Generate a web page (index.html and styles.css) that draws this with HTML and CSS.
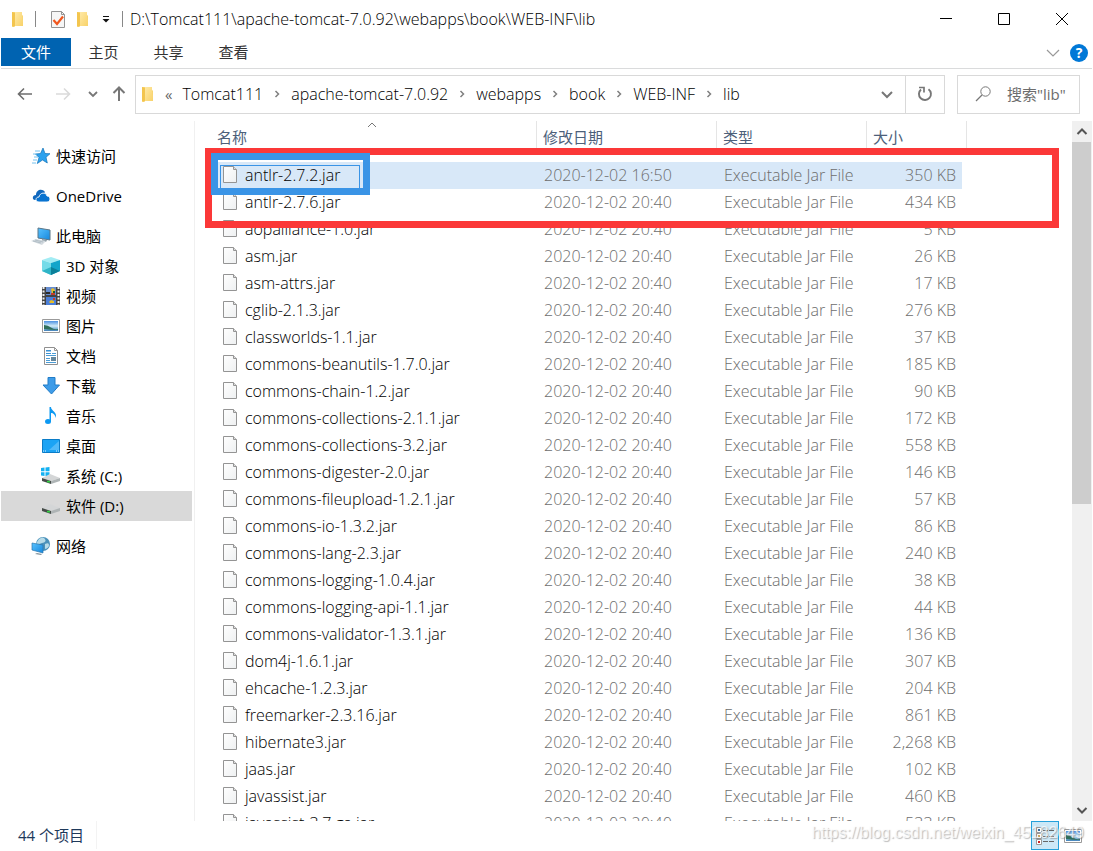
FILE: index.html
```html
<!DOCTYPE html>
<html lang="zh-CN">
<head>
<meta charset="utf-8">
<title>lib</title>
<link rel="stylesheet" href="styles.css">
</head>
<body>
<svg class="defs" width="0" height="0" aria-hidden="true">
  <defs>
    <linearGradient id="fold" x1="0" y1="0" x2="1" y2="1"><stop offset="0" stop-color="#ffe9a6"/><stop offset="1" stop-color="#f8d269"/></linearGradient>
    <linearGradient id="sky" x1="0" y1="0" x2="0" y2="1"><stop offset="0" stop-color="#4a90e2"/><stop offset=".5" stop-color="#d4ecf7"/><stop offset=".7" stop-color="#8fbfe0"/><stop offset="1" stop-color="#3f7fb8"/></linearGradient>
    <linearGradient id="blue" x1="0" y1="0" x2="1" y2="1"><stop offset="0" stop-color="#58c2ff"/><stop offset="1" stop-color="#1687dc"/></linearGradient>
    <linearGradient id="paper" x1="0" y1="0" x2="1" y2="1"><stop offset="0" stop-color="#fff"/><stop offset="1" stop-color="#eef0f1"/></linearGradient>
    <symbol id="folder" viewBox="0 0 14 17"><path d="M1 1h8l3 4v10H4L1 16z" fill="#f9d673"/><path d="M4 1h7v8h1v6H4z" fill="url(#fold)"/><path d="M1 1l3 1v13l-1 1-2-1z" fill="#f3c54e"/></symbol>
    <symbol id="file" viewBox="0 0 16 19"><path d="M1.500 1.500h10l3 3v13h-13z" fill="url(#paper)" stroke="#949494"/><path d="M11.500 1.500v3h3" fill="#ddd" stroke="#949494"/></symbol>
    <symbol id="chev" viewBox="0 0 6 8"><path d="M1.500 1l3 3-3 3" fill="none" stroke="#808080" stroke-width="1.500"/></symbol>
    <symbol id="picture" viewBox="0 0 18 14"><path d="M.5.500h17v13H.5z" fill="#fff" stroke="#9a9a9a"/><path d="M2 2h14v10H2z" fill="url(#sky)"/><path d="M2 6q4 0 7 2.500t7 1.500v1q-8 0-14-1z" fill="#2f6f5c"/></symbol>
    <symbol id="drive" viewBox="0 0 18 11"><path d="M0 5L8 1l10 4-9 3z" fill="#d4d6d7"/><path d="M0 5l9 3v3L0 8z" fill="#454c48"/><path d="M9 8l9-3v3l-9 3z" fill="#aeb4b5"/><path d="M5 7.800h3v1.700H5z" fill="#34cf45"/></symbol>
  </defs>
</svg>
<div class="window">
  <header class="titlebar">
    <svg class="ic-folder" role="img" aria-label="lib"><use href="#folder"/></svg>
    <span class="sep"></span>
    <svg class="ic-check" viewBox="0 0 16 19"><path d="M1.500 1.500h10l3 3v13h-13z" fill="#f6f6f6" stroke="#949494"/><path d="M11.500 1.500v3h3" fill="none" stroke="#949494"/><path d="M3.500 10l3.500 4 6-7.500" fill="none" stroke="#f0571f" stroke-width="2.200"/></svg>
    <svg class="ic-folder"><use href="#folder"/></svg>
    <svg class="ic-drop" viewBox="0 0 8 8"><path d="M1 1.500h6" stroke="#111"/><path d="M.5 4h7L4 7.500z" fill="#111"/></svg>
    <span class="sep sep-title"></span>
    <h1 class="title">D:\Tomcat111\apache-tomcat-7.0.92\webapps\book\WEB-INF\lib</h1>
    <div class="winbtns">
      <button type="button" aria-label="最小化"><svg viewBox="0 0 14 14"><path d="M1 6.500h12" stroke="#000"/></svg></button>
      <button type="button" aria-label="最大化"><svg viewBox="0 0 14 14"><path d="M1.500 1.500h11v11h-11z" fill="none" stroke="#000"/></svg></button>
      <button type="button" aria-label="关闭"><svg viewBox="0 0 14 14"><path d="M1 1l12 12M13 1L1 13" stroke="#000"/></svg></button>
    </div>
  </header>
  <nav class="ribbon">
    <button type="button" class="tab tab-file">文件</button>
    <button type="button" class="tab">主页</button>
    <button type="button" class="tab">共享</button>
    <button type="button" class="tab">查看</button>
    <div class="ribbon-right">
      <button type="button" aria-label="展开功能区"><svg class="ic-expand" viewBox="0 0 14 8"><path d="M1 1l6 6 6-6" fill="none" stroke="#999" stroke-width="1.200"/></svg></button>
      <button type="button" class="help" aria-label="帮助">?</button>
    </div>
  </nav>
  <div class="navrow">
    <div class="arrows">
      <button type="button" aria-label="后退"><svg viewBox="0 0 16 14"><path d="M15 7H1.500M7 1.500L1.500 7 7 12.500" fill="none" stroke="#6d6d6d" stroke-width="1.600"/></svg></button>
      <button type="button" aria-label="前进"><svg viewBox="0 0 16 14"><path d="M1 7h13.500M9 1.500L14.500 7 9 12.500" fill="none" stroke="#dadada" stroke-width="1.600"/></svg></button>
      <button type="button" aria-label="最近位置" class="recent"><svg viewBox="0 0 10 8"><path d="M1 2l4 4 4-4" fill="none" stroke="#777" stroke-width="1.800"/></svg></button>
      <button type="button" aria-label="上移" class="up"><svg viewBox="0 0 14 16"><path d="M7 15V1.500M1.500 7L7 1.500 12.500 7" fill="none" stroke="#777" stroke-width="2"/></svg></button>
    </div>
    <div class="address">
      <svg class="ic-folder"><use href="#folder"/></svg>
      <span class="laquo">«</span>
      <div class="crumbs">
        <a href="#">Tomcat111</a><svg class="ic-chev"><use href="#chev"/></svg>
        <a href="#">apache-tomcat-7.0.92</a><svg class="ic-chev"><use href="#chev"/></svg>
        <a href="#">webapps</a><svg class="ic-chev"><use href="#chev"/></svg>
        <a href="#">book</a><svg class="ic-chev"><use href="#chev"/></svg>
        <a href="#">WEB-INF</a><svg class="ic-chev"><use href="#chev"/></svg>
        <a href="#">lib</a>
      </div>
      <button type="button" class="history" aria-label="历史"><svg viewBox="0 0 12 9"><path d="M1 2l5 5 5-5" fill="none" stroke="#777" stroke-width="2"/></svg></button>
      <button type="button" class="refresh" aria-label="刷新"><svg viewBox="0 0 16 16"><path d="M11.500 3.200A6 6 0 1 1 4 3.500" fill="none" stroke="#777" stroke-width="1.900"/><path d="M2 1.500h5v5" fill="none" stroke="#777" stroke-width="1.700"/></svg></button>
    </div>
    <label class="search">
      <svg viewBox="0 0 16 16"><circle cx="10.500" cy="5.500" r="4.700" fill="none" stroke="#777"/><path d="M7 9l-6 6" stroke="#777" stroke-width="1.200"/></svg>
      <input type="text" aria-label="搜索" placeholder='搜索"lib"'>
    </label>
  </div>
  <main class="body">
    <nav class="tree">
      <a href="#" class="top"><svg viewBox="0 0 20 20"><path d="M12 2l2 5.500 5 .2-4 3.600 1.300 5.700-4.800-3-5.200 3.500 1.700-6L4.500 8l5-.5z" fill="#2ba1ee" stroke="#1273b8" stroke-width=".7"/><path d="M4 5h5M2 8h4M3 11h4M2 14h4M1 17h4" stroke="#75c2ef"/></svg>快速访问</a>
      <a href="#" class="top"><svg viewBox="0 0 20 20"><path d="M4 14C1 14 1 9 5 9c0-5 6-7 9-3l-5 8z" fill="#1168bd"/><path d="M8 16c-4 0-4-5 0-5 1-5 7-5 8-1 4 0 4 6 0 6z" fill="#0873d0" stroke="#fff" stroke-width=".9"/></svg>OneDrive</a>
      <a href="#" class="top"><svg viewBox="0 0 20 20"><path d="M7 2l12 2v10L7 12z" fill="url(#blue)" stroke="#5b7688"/><path d="M11 13l5 1-1 2-4-1z" fill="#8c9aa2"/><path d="M0 15l5-2 10 2-4 4z" fill="#d3dadf"/><path d="M2 15l8 2M4 14l8 2" stroke="#9aabb5" stroke-width=".6"/></svg>此电脑</a>
      <a href="#"><svg viewBox="0 0 20 20"><path d="M10 1l9 3-9 3-9-3z" fill="#a2ecf4"/><path d="M1 4l9 3v12l-9-4z" fill="#74dbe8"/><path d="M19 4l-9 3v12l9-4z" fill="#13a5ca"/><path d="M1 15l9-4v8z" fill="#2fb4c6"/><path d="M19 15l-9-4v8z" fill="#0c8099"/></svg>3D 对象</a>
      <a href="#"><svg viewBox="0 0 20 20"><path d="M1 1h18v18H1z" fill="#444"/><path d="M5 1h10v8H5z" fill="#668dcf"/><path d="M5 11h10v8H5z" fill="#4a7ed8"/><path d="M2.500 1v18M17.500 1v18" stroke="#eee" stroke-width="2" stroke-dasharray="2 1.500"/><path d="M10 3l2-1 2 2v3l-3 1z" fill="#e5bd2b"/><path d="M8 16l2-2 3 1v2H9z" fill="#e5bd2b"/><path d="M5 6h4v2H5z" fill="#2b2b2b"/><path d="M10 7h4v2h-4zM12 12h2v2h-2z" fill="#c53c2a"/><path d="M12 5h2v2h-2z" fill="#1d5a30"/></svg>视频</a>
      <a href="#"><svg viewBox="0 0 20 20"><use href="#picture" x="1" y="3" width="18" height="14"/></svg>图片</a>
      <a href="#"><svg viewBox="0 0 20 20"><path d="M3.500 1.500h10l3 3v14h-13z" fill="#fff" stroke="#909090"/><path d="M13.500 1.500v3h3" fill="none" stroke="#999"/><path d="M5 4h5v1.500H5zM5 7h5v1H5z" fill="#3b91d2"/><path d="M5 9.500h10M5 12.500h4M5 14.500h4M5 16.500h10M11 7.500h4" stroke="#4b9cd5"/><path d="M10 11h5v4h-5z" fill="#64869b"/></svg>文档</a>
      <a href="#"><svg viewBox="0 0 20 20"><path d="M7 1.500h7V9h4.500L10.500 18 2 9h5z" fill="#3e9ce8" stroke="#217cc7"/></svg>下载</a>
      <a href="#"><svg viewBox="0 0 20 20"><ellipse cx="7" cy="15.500" rx="3" ry="2.500" fill="#0d99f2"/><path d="M8.500 15.500V1h1.500c0 4 7 5 4.500 11 0-3-2-5-4.500-5v8.500z" fill="#0d99f2"/></svg>音乐</a>
      <a href="#"><svg viewBox="0 0 20 20"><path d="M1.500 3.500h17v13h-17z" fill="#1ba3f4" stroke="#0a7cc7"/><path d="M18 5L8 14h10z" fill="#51b9f8"/><path d="M2 15h3M15 15h3" stroke="#dff2ff" stroke-dasharray="1 1"/></svg>桌面</a>
      <a href="#"><svg viewBox="0 0 20 20"><path d="M0 2l3.500-.5v3.700H0zM4.500 1.400L8.500 1v4.200h-4zM0 6.200h3.500v3.700L0 9.500zM4.500 6.200h4v4.200l-4-.4z" fill="#13b1f2"/><use href="#drive" x="1" y="7" width="18" height="11"/></svg>系统 (C:)</a>
      <a href="#" class="current"><svg viewBox="0 0 20 20"><use href="#drive" x="1" y="7" width="18" height="11"/></svg>软件 (D:)</a>
      <a href="#" class="top last"><svg viewBox="0 0 20 20"><circle cx="12" cy="8" r="7" fill="#4a91ba"/><path d="M8 3q4-3 6 0t-3 4-3 5q-4-3-2-6zM14 8q4-2 4 1t-4 4z" fill="#b7dbe8"/><path d="M1 7l11 2v8L1 14z" fill="url(#blue)" stroke="#2b77ae" stroke-width=".7"/><path d="M6 17l5 1-1 1-6-1z" fill="#82929b"/></svg>网络</a>
    </nav>
    <section class="files">
      <table>
        <colgroup><col><col class="c-date"><col class="c-type"><col class="c-size"></colgroup>
        <thead><tr>
          <th><span class="th th-first">名称<svg class="sort" viewBox="0 0 10 6"><path d="M1 5l4-4 4 4" fill="none" stroke="#777"/></svg></span></th>
          <th><span class="th">修改日期</span></th><th><span class="th">类型</span></th><th><span class="th th-last">大小</span></th>
        </tr></thead>
        <tbody>
          <tr class="selected"><td><svg><use href="#file"/></svg>antlr-2.7.2.jar</td><td>2020-12-02 16:50</td><td>Executable Jar File</td><td>350 KB</td></tr>
          <tr><td><svg><use href="#file"/></svg>antlr-2.7.6.jar</td><td>2020-12-02 20:40</td><td>Executable Jar File</td><td>434 KB</td></tr>
          <tr><td><svg><use href="#file"/></svg>aopalliance-1.0.jar</td><td>2020-12-02 20:40</td><td>Executable Jar File</td><td>5 KB</td></tr>
          <tr><td><svg><use href="#file"/></svg>asm.jar</td><td>2020-12-02 20:40</td><td>Executable Jar File</td><td>26 KB</td></tr>
          <tr><td><svg><use href="#file"/></svg>asm-attrs.jar</td><td>2020-12-02 20:40</td><td>Executable Jar File</td><td>17 KB</td></tr>
          <tr><td><svg><use href="#file"/></svg>cglib-2.1.3.jar</td><td>2020-12-02 20:40</td><td>Executable Jar File</td><td>276 KB</td></tr>
          <tr><td><svg><use href="#file"/></svg>classworlds-1.1.jar</td><td>2020-12-02 20:40</td><td>Executable Jar File</td><td>37 KB</td></tr>
          <tr><td><svg><use href="#file"/></svg>commons-beanutils-1.7.0.jar</td><td>2020-12-02 20:40</td><td>Executable Jar File</td><td>185 KB</td></tr>
          <tr><td><svg><use href="#file"/></svg>commons-chain-1.2.jar</td><td>2020-12-02 20:40</td><td>Executable Jar File</td><td>90 KB</td></tr>
          <tr><td><svg><use href="#file"/></svg>commons-collections-2.1.1.jar</td><td>2020-12-02 20:40</td><td>Executable Jar File</td><td>172 KB</td></tr>
          <tr><td><svg><use href="#file"/></svg>commons-collections-3.2.jar</td><td>2020-12-02 20:40</td><td>Executable Jar File</td><td>558 KB</td></tr>
          <tr><td><svg><use href="#file"/></svg>commons-digester-2.0.jar</td><td>2020-12-02 20:40</td><td>Executable Jar File</td><td>146 KB</td></tr>
          <tr><td><svg><use href="#file"/></svg>commons-fileupload-1.2.1.jar</td><td>2020-12-02 20:40</td><td>Executable Jar File</td><td>57 KB</td></tr>
          <tr><td><svg><use href="#file"/></svg>commons-io-1.3.2.jar</td><td>2020-12-02 20:40</td><td>Executable Jar File</td><td>86 KB</td></tr>
          <tr><td><svg><use href="#file"/></svg>commons-lang-2.3.jar</td><td>2020-12-02 20:40</td><td>Executable Jar File</td><td>240 KB</td></tr>
          <tr><td><svg><use href="#file"/></svg>commons-logging-1.0.4.jar</td><td>2020-12-02 20:40</td><td>Executable Jar File</td><td>38 KB</td></tr>
          <tr><td><svg><use href="#file"/></svg>commons-logging-api-1.1.jar</td><td>2020-12-02 20:40</td><td>Executable Jar File</td><td>44 KB</td></tr>
          <tr><td><svg><use href="#file"/></svg>commons-validator-1.3.1.jar</td><td>2020-12-02 20:40</td><td>Executable Jar File</td><td>136 KB</td></tr>
          <tr><td><svg><use href="#file"/></svg>dom4j-1.6.1.jar</td><td>2020-12-02 20:40</td><td>Executable Jar File</td><td>307 KB</td></tr>
          <tr><td><svg><use href="#file"/></svg>ehcache-1.2.3.jar</td><td>2020-12-02 20:40</td><td>Executable Jar File</td><td>204 KB</td></tr>
          <tr><td><svg><use href="#file"/></svg>freemarker-2.3.16.jar</td><td>2020-12-02 20:40</td><td>Executable Jar File</td><td>861 KB</td></tr>
          <tr><td><svg><use href="#file"/></svg>hibernate3.jar</td><td>2020-12-02 20:40</td><td>Executable Jar File</td><td>2,268 KB</td></tr>
          <tr><td><svg><use href="#file"/></svg>jaas.jar</td><td>2020-12-02 20:40</td><td>Executable Jar File</td><td>102 KB</td></tr>
          <tr><td><svg><use href="#file"/></svg>javassist.jar</td><td>2020-12-02 20:40</td><td>Executable Jar File</td><td>460 KB</td></tr>
          <tr><td><svg><use href="#file"/></svg>javassist-3.7.ga.jar</td><td>2020-12-02 20:40</td><td>Executable Jar File</td><td>533 KB</td></tr>
        </tbody>
      </table>
      <div class="mark mark-red"></div>
      <div class="mark mark-blue"></div>
    </section>
    <div class="scrollbar">
      <button type="button" aria-label="向上滚动"><svg viewBox="0 0 12 9"><path d="M1.500 7L6 2.500 10.500 7" fill="none" stroke="#555" stroke-width="2"/></svg></button>
      <div class="track"><div class="thumb"></div></div>
      <button type="button" aria-label="向下滚动"><svg viewBox="0 0 12 9"><path d="M1.500 2L6 6.500 10.500 2" fill="none" stroke="#555" stroke-width="2"/></svg></button>
    </div>
  </main>
  <footer class="status">
    <span class="count">44 个项目</span>
    <div class="views">
      <button type="button" class="active" aria-label="详细信息"><svg viewBox="0 0 18 18"><path d="M.5.500h5v5h-5zM.5 6.500h5v5h-5zM.5 12.500h5v5h-5z" fill="#fff" stroke="#999"/><path d="M2 2h2v2H2z" fill="#3a6e9e"/><path d="M2 8h2v2H2z" fill="#c9a35a"/><path d="M2 14h2v2H2z" fill="#c22"/><path d="M7 3.500h5M13 3.500h5M7 9.500h5M13 9.500h5M7 14.500h5M13 14.500h5" stroke="#666"/></svg></button>
      <button type="button" aria-label="大图标"><svg viewBox="0 0 18 14"><use href="#picture" width="18" height="14"/></svg></button>
      <span class="watermark">https://blog.csdn.net/weixin_45182649</span>
    </div>
  </footer>
</div>
</body>
</html>
```
FILE: styles.css
```css
* { box-sizing: border-box; }
body {
  margin: 0;
  background: #fff;
  color: #000;
  font: 15px/20px "Open Sans", "Noto Sans CJK SC", sans-serif;
}
button { border: 0; padding: 0; background: none; font: inherit; color: inherit; display: grid; place-items: center; }
a { color: inherit; text-decoration: none; }
svg { display: block; flex: none; }
.defs { position: absolute; }
.window { height: 100vh; display: flex; flex-direction: column; overflow: hidden; padding: 0 1px; }

.titlebar { height: 38px; flex: none; display: flex; align-items: center; padding-left: 10px; }
.ic-folder { width: 14px; height: 17px; }
.sep { width: 1px; height: 16px; background: #888; margin: 0 14px 0 10px; }
.ic-check { width: 16px; height: 19px; margin-right: 10px; }
.ic-drop { width: 8px; height: 8px; margin-left: 12px; }
.sep-title { margin: 0 7px 0 12px; }
.title { margin: 0; font-size: 16px; font-weight: 300; white-space: nowrap; }
.winbtns { margin-left: auto; margin-right: 1px; display: flex; }
.winbtns button { width: 58px; height: 38px; }
.winbtns svg { width: 14px; height: 14px; }

.ribbon { flex: none; height: 31px; display: flex; align-items: flex-start; border-bottom: 1px solid #dadbdc; color: #333; }
.tab { height: 28px; width: 65px; }
.tab-file { width: 70px; background: #0063b1; color: #fff; }
.ribbon-right { margin-left: auto; display: flex; align-items: center; gap: 10px; height: 30px; padding-right: 4px; }
.ic-expand { width: 14px; height: 8px; }
.help { width: 18px; height: 18px; border-radius: 50%; background: #0078d7; color: #fff; font-weight: 700; font-size: 14px; line-height: 18px; }

.navrow { flex: none; display: flex; height: 52px; align-items: center; padding: 0 12px 2px 16px; }
.arrows { display: flex; align-items: center; width: 118px; gap: 22px; }
.arrows svg { width: 16px; height: 14px; }
.arrows .recent svg { width: 10px; height: 8px; }
.arrows .recent { margin-left: -5px; }
.arrows .up { margin-left: -8px; }
.arrows .up svg { width: 14px; height: 16px; }
.address { flex: 1; height: 39px; display: flex; align-items: center; border: 1px solid #d9d9d9; padding-left: 5px; }
.laquo { color: #666; margin: 0 10px; }
.crumbs { display: flex; align-items: center; gap: 11px; flex: 1; white-space: nowrap; font-size: 16px; font-weight: 300; }
.ic-chev { width: 6px; height: 8px; }
.history { width: 37px; height: 37px; }
.history svg { width: 12px; height: 9px; }
.refresh { width: 39px; height: 37px; border-left: 1px solid #d9d9d9; }
.refresh svg { width: 16px; height: 16px; }
.search { width: 123px; height: 39px; margin-left: 12px; border: 1px solid #d9d9d9; display: flex; align-items: center; padding-left: 17px; gap: 16px; }
.search svg { width: 16px; height: 16px; }
.search input { flex: 1; min-width: 0; border: 0; outline: 0; padding: 0; background: none; font: inherit; }
.search input::placeholder { color: #6d6d6d; opacity: 1; }

.body { flex: 1; min-height: 0; display: flex; }
.tree { width: 194px; flex: none; border-right: 1px solid #f0f0f0; padding: 20px 2px 0 0; }
.tree a { height: 30px; display: flex; align-items: center; padding-left: 40px; gap: 5px; }
.tree svg { width: 20px; height: 20px; }
.tree .top { padding-left: 30px; margin-bottom: 10px; }
.tree .top:nth-child(3) { margin-bottom: 0; }
.tree .last { margin-top: 10px; }
.tree .current { background: #d9d9d9; }

.files { position: relative; flex: 1; min-width: 0; overflow: hidden; padding: 0 110px 0 16px; }
table { width: 100%; table-layout: fixed; border-collapse: collapse; }
.c-date { width: 180px; }
.c-type { width: 150px; }
.c-size { width: 96px; }
th { height: 41px; padding: 0; font-weight: 400; text-align: left; vertical-align: top; color: #4c607a; }
.th { position: relative; display: block; height: 32px; line-height: 32px; margin-right: -1px; padding-left: 7px; border-right: 1px solid #e5e5e5; }
.th-first { padding-left: 6px; }
.th-last { width: 101px; }
.sort { position: absolute; left: 48%; top: 1px; width: 10px; height: 6px; }
td { height: 27px; padding: 0 0 0 8px; line-height: 27px; color: #6d6d6d; white-space: nowrap; font-size: 16px; font-weight: 300; }
td:first-child { display: flex; align-items: center; gap: 7px; padding-left: 11px; color: #000; }
td:first-child svg { width: 16px; height: 19px; margin-bottom: 2px; }
td:last-child { text-align: right; padding-right: 6px; }
.selected { background: #d8e8f8; }
.mark { position: absolute; pointer-events: none; }
.mark-red { left: 10px; right: 13px; top: 27px; height: 80px; border: 7px solid #fb3838; }
.mark-blue { left: 16px; top: 32px; width: 159px; height: 42px; border: 7px solid #3a94e6; }
.mark-blue::after { content: ""; position: absolute; inset: 5px 3px 0 2px; border: 1px solid #3a94e6; border-bottom: 0; }

.scrollbar { flex: none; width: 20px; background: #f0f0f0; display: flex; flex-direction: column; }
.scrollbar button { height: 21px; }
.scrollbar svg { width: 12px; height: 9px; }
.track { flex: 1; }
.thumb { height: 55%; background: #cdcdcd; margin-right: 1px; }

.status { flex: none; height: 30px; display: flex; justify-content: space-between; padding-left: 17px; }
.count { color: #1e395b; height: 28px; line-height: 28px; padding-right: 12px; border-right: 1px solid #f3f3f3; }
.views { position: relative; display: flex; padding-right: 5px; }
.views button { width: 28px; height: 29px; }
.views .active { background: #cce8f7; border: 1px solid #26a0da; }
.views svg { width: 18px; height: 18px; }
.watermark { position: absolute; right: 8px; top: 2px; font: 16px/20px "Liberation Sans", sans-serif; color: rgba(255, 255, 255, .7); text-shadow: 1px 1px 1px rgba(120, 120, 120, .5); white-space: nowrap; }
```
